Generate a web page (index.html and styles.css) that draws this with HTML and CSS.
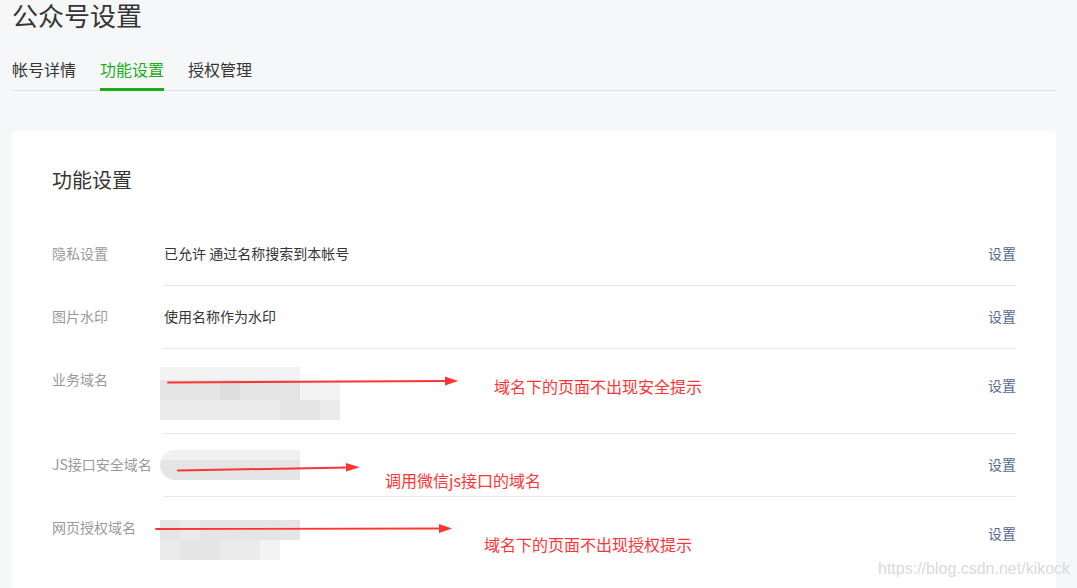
FILE: index.html
```html
<!DOCTYPE html>
<html lang="zh-CN">
<head>
<meta charset="utf-8">
<title>公众号设置</title>
<link rel="stylesheet" href="styles.css">
</head>
<body>
<div class="page">
  <h1 class="title">公众号设置</h1>
  <nav class="tabs">
    <a class="tab">帐号详情</a>
    <a class="tab active">功能设置</a>
    <a class="tab">授权管理</a>
  </nav>

  <section class="card">
    <h2 class="card-title">功能设置</h2>

    <div class="row">
      <div class="label">隐私设置</div>
      <div class="body">
        <div class="value">已允许 通过名称搜索到本帐号</div>
        <a class="action">设置</a>
      </div>
    </div>

    <div class="row">
      <div class="label">图片水印</div>
      <div class="body">
        <div class="value">使用名称作为水印</div>
        <a class="action">设置</a>
      </div>
    </div>

    <div class="row">
      <div class="label">业务域名</div>
      <div class="body">
        <div class="value">
          <div class="mosaic mosaic-a">
            <span class="s1"></span><span class="s1"></span><span class="s1"></span><span class="s1"></span><span class="s1"></span><span class="s1"></span><span class="s1"></span><span></span><span></span>
            <span class="s3"></span><span class="s3"></span><span class="s3"></span><span class="s4"></span><span class="s3"></span><span class="s3"></span><span class="s3"></span><span class="s1"></span><span class="s1"></span>
            <span class="s2"></span><span class="s2"></span><span class="s2"></span><span class="s2"></span><span class="s2"></span><span class="s2"></span><span class="s3"></span><span class="s3"></span><span class="s2"></span>
          </div>
        </div>
        <a class="action action-multi">设置</a>
      </div>
    </div>

    <div class="row">
      <div class="label">JS接口安全域名</div>
      <div class="body">
        <div class="value">
          <div class="pill"></div>
        </div>
        <a class="action">设置</a>
      </div>
    </div>

    <div class="row">
      <div class="label">网页授权域名</div>
      <div class="body">
        <div class="value">
          <div class="mosaic mosaic-c">
            <span class="s3"></span><span class="s2"></span><span class="s3"></span><span class="s3"></span><span class="s3"></span><span class="s3"></span><span class="s3"></span>
            <span class="s2"></span><span class="s3"></span><span class="s3"></span><span class="s2"></span><span class="s2"></span><span class="s1"></span><span></span>
          </div>
        </div>
        <a class="action action-multi">设置</a>
      </div>
    </div>
  </section>

  <div class="annotations">
    <svg class="arrows" width="1077" height="588" viewBox="0 0 1077 588" xmlns="http://www.w3.org/2000/svg">
      <g fill="#ff3535" stroke="#ff3535" stroke-linecap="round">
        <line x1="168" y1="382.5" x2="447" y2="381" stroke-width="2"/>
        <polygon points="445,376.5 458,381 445,385.5" stroke="none"/>
        <line x1="178" y1="470.5" x2="348" y2="467.5" stroke-width="2"/>
        <polygon points="346,463 360,467.2 346,471.5" stroke="none"/>
        <line x1="156" y1="529" x2="442" y2="528.5" stroke-width="1.8"/>
        <polygon points="439,524 452,528.5 439,533" stroke="none"/>
      </g>
    </svg>
    <span class="note note-1">域名下的页面不出现安全提示</span>
    <span class="note note-2">调用微信js接口的域名</span>
    <span class="note note-3">域名下的页面不出现授权提示</span>
  </div>

  <div class="watermark">https://blog.csdn.net/kikock</div>
</div>
</body>
</html>
```

FILE: styles.css
```css
html, body {
  margin: 0;
  padding: 0;
  background: #f6f7f9;
  overflow: hidden;
}

body {
  font-family: "Noto Sans CJK SC", "Microsoft YaHei", sans-serif;
  color: #353535;
}

.page {
  position: relative;
  width: 1077px;
  height: 588px;
  padding: 0 21px 0 12px;
  box-sizing: border-box;
  overflow: hidden;
  display: flex;
  flex-direction: column;
}

.title {
  margin: 0;
  font-size: 26px;
  line-height: 30px;
  font-weight: 400;
  color: #353535;
}

.tabs {
  display: flex;
  gap: 24px;
  margin-top: 27px;
  border-bottom: 1px solid #e2e3e6;
}

.tab {
  font-size: 16px;
  line-height: 24px;
  padding-bottom: 7px;
  border-bottom: 3px solid transparent;
  margin-bottom: -1px;
  color: #353535;
  cursor: pointer;
}

.tab.active {
  color: #1aad19;
  border-bottom-color: #1aad19;
}

.card {
  flex: 1;
  margin-top: 40px;
  background: #fff;
  border-radius: 4px 4px 0 0;
  padding: 35px 40px 0;
  min-height: 0;
  overflow: hidden;
}

.card-title {
  margin: 0 0 29px;
  font-size: 20px;
  line-height: 28px;
  font-weight: 400;
  color: #353535;
}

.row {
  display: flex;
  font-size: 14px;
  line-height: 22px;
}

.label {
  width: 112px;
  flex: none;
  padding: 19px 0 21px;
  color: #9a9a9a;
  white-space: nowrap;
}

.body {
  flex: 1;
  display: flex;
  justify-content: space-between;
  align-items: flex-start;
  padding: 19px 0 21px;
  border-bottom: 1px solid #e7e7eb;
}

.row:last-child .body {
  border-bottom: none;
}

.value {
  color: #353535;
}

.action {
  color: #576b95;
  cursor: pointer;
}

.action-multi {
  padding-top: 6px;
}

/* blurred domain placeholders */
.mosaic {
  display: grid;
  margin-left: -4px;
}

.mosaic-a {
  grid-template-columns: repeat(9, 20px);
  grid-template-rows: 13px 20px 20px;
  margin-top: -1px;
  margin-bottom: -8px;
}

.mosaic-c {
  grid-template-columns: repeat(7, 20px);
  grid-template-rows: 20px 20px;
  margin-top: 4px;
  margin-bottom: -4px;
}

.s1 { background: #f3f3f3; }
.s2 { background: #ebebeb; }
.s3 { background: #e5e5e5; }
.s4 { background: #dedede; }

.pill {
  width: 140px;
  height: 30px;
  margin: -3px 0 -5px -4px;
  border-radius: 15px 0 0 15px;
  background: linear-gradient(#f1f1f1 0 10px, #e5e5e5 10px);
}

/* red annotations over the screenshot */
.annotations {
  position: absolute;
  left: 0;
  top: 0;
  width: 1077px;
  height: 588px;
  pointer-events: none;
}

.arrows {
  position: absolute;
  left: 0;
  top: 0;
}

.note {
  position: absolute;
  font-size: 16px;
  line-height: 20px;
  color: #ff3535;
  white-space: nowrap;
}

.note-1 { left: 494px; top: 376px; }
.note-2 { left: 385px; top: 470px; }
.note-3 { left: 484px; top: 534px; }

.watermark {
  position: absolute;
  left: 878px;
  top: 558px;
  font-family: "Liberation Sans", Arial, sans-serif;
  font-size: 16px;
  line-height: 22px;
  color: #dadada;
  white-space: nowrap;
}
```
